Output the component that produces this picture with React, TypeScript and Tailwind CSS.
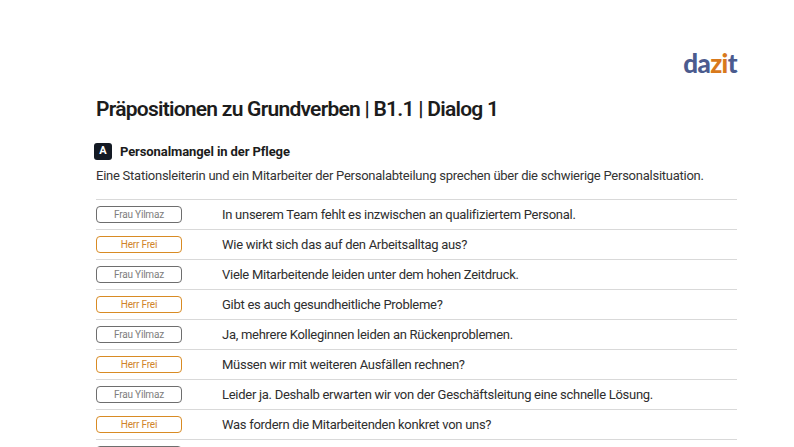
const rows: { speaker: "Frau Yilmaz" | "Herr Frei"; text: string }[] = [
	{ speaker: "Frau Yilmaz", text: "In unserem Team fehlt es inzwischen an qualifiziertem Personal." },
	{ speaker: "Herr Frei", text: "Wie wirkt sich das auf den Arbeitsalltag aus?" },
	{ speaker: "Frau Yilmaz", text: "Viele Mitarbeitende leiden unter dem hohen Zeitdruck." },
	{ speaker: "Herr Frei", text: "Gibt es auch gesundheitliche Probleme?" },
	{ speaker: "Frau Yilmaz", text: "Ja, mehrere Kolleginnen leiden an Rückenproblemen." },
	{ speaker: "Herr Frei", text: "Müssen wir mit weiteren Ausfällen rechnen?" },
	{
		speaker: "Frau Yilmaz",
		text: "Leider ja. Deshalb erwarten wir von der Geschäftsleitung eine schnelle Lösung.",
	},
	{ speaker: "Herr Frei", text: "Was fordern die Mitarbeitenden konkret von uns?" },
	// next line starts below the fold, only its tag peeks in
	{ speaker: "Frau Yilmaz", text: "" },
];

function SpeakerTag({ speaker }: { speaker: string }) {
	const isFrei = speaker === "Herr Frei";
	return (
		<span
			className={`flex h-[17px] w-[86px] shrink-0 items-center justify-center rounded-[4px] border text-[10px] leading-none tracking-[-0.2px] ${
				isFrei
					? "border-[#d88b24] text-[#d0842a]"
					: "border-[#6e6e6e] text-[#7d7d7d]"
			}`}
		>
			{speaker}
		</span>
	);
}

export default function App() {
	return (
		<div className="h-[447px] w-[794px] overflow-hidden bg-white font-['Roboto','Noto_Sans',sans-serif] text-[#2b2b2b]">
			<div className="pl-[96px] pr-[57px] pt-[52px]">
				<div className="flex h-[24px] items-end justify-end">
					<span className="font-['Lato',sans-serif] text-[26px] font-black leading-none tracking-[-0.6px]">
						<span className="text-[#4b5b8e]">da</span>
						<span className="text-[#d8791c]">zi</span>
						<span className="text-[#4b5b8e]">t</span>
					</span>
				</div>

				<h1 className="mt-[19px] text-[21px] font-semibold leading-[28px] tracking-[-0.75px] text-[#1c1c1c]">
					Präpositionen zu Grundverben | B1.1 | Dialog 1
				</h1>

				<div className="mt-[20px] flex h-[17px] items-center gap-[8px]">
					<span className="-ml-[2px] flex h-[17px] w-[18px] items-center justify-center rounded-[3px] bg-[#141a24] text-[11px] font-bold text-white">
						A
					</span>
					<span className="text-[13px] font-bold tracking-[-0.1px] text-[#1c1c1c]">
						Personalmangel in der Pflege
					</span>
				</div>

				<p className="mt-[6px] text-[13px] leading-[20px] tracking-[-0.25px] text-[#333]">
					Eine Stationsleiterin und ein Mitarbeiter der Personalabteilung sprechen über die
					schwierige Personalsituation.
				</p>

				<div className="mt-[13px]">
					{rows.map((row, i) => (
						<div
							key={i}
							className="flex h-[30px] items-center gap-[40px] border-t border-[#d9d9d9]"
						>
							<SpeakerTag speaker={row.speaker} />
							<span className="text-[13px] tracking-[-0.28px] text-[#2e2e2e]">
								{row.text}
							</span>
						</div>
					))}
				</div>
			</div>
		</div>
	);
}
